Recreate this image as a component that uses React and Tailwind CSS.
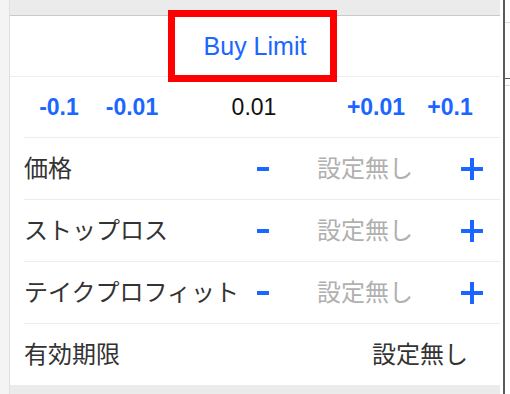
import React from 'react'

const BLUE = 'text-[#1a66ff]'

const STEPS = [
  { label: '-0.1', w: 'w-[70px]', blue: true },
  { label: '-0.01', w: 'w-[76px]', blue: true },
  { label: '0.01', w: 'w-[168px]', blue: false },
  { label: '+0.01', w: 'w-[76px]', blue: true },
  { label: '+0.1', w: 'w-[72px]', blue: true },
]

const ROWS = ['価格', 'ストップロス', 'テイクプロフィット']

function Minus() {
  return <div className="w-[12px] h-[4px] bg-[#1a66ff]" />
}

function Plus() {
  return (
    <div className="relative w-[22px] h-[22px] flex items-center justify-center">
      <div className="w-[22px] h-[4px] bg-[#1a66ff]" />
      <div className="absolute w-[4px] h-[22px] bg-[#1a66ff]" />
    </div>
  )
}

function StepperRow({ label }) {
  return (
    <div className="ml-[14px] h-[62px] flex items-center border-b border-[#ececec]">
      <span className="w-[233px] text-[24px] leading-none text-[#333]">{label}</span>
      <Minus />
      <span className="ml-[48px] w-[96px] text-[24px] leading-none text-[#b0b0b0]">設定無し</span>
      <div className="ml-[48px]">
        <Plus />
      </div>
    </div>
  )
}

export default function App() {
  return (
    <div
      className="w-[510px] h-[394px] flex overflow-hidden bg-white"
      style={{ fontFamily: '"Liberation Sans", "Noto Sans CJK JP", sans-serif' }}
    >
      {/* left gutter */}
      <div className="w-[10px] h-full bg-[#f4f4f4] border-r border-[#e0e0e0]" />

      {/* order panel */}
      <div className="relative w-[490px] h-full flex flex-col bg-white">
        <div className="h-[16px] bg-[#ebebeb] border-b border-[#c9c9c9]" />

        <div className="h-[61px] flex items-center justify-center border-b border-[#efefef]">
          <span className={`text-[25px] leading-none ${BLUE}`}>Buy Limit</span>
        </div>

        {/* highlight box */}
        <div className="absolute left-[158px] top-[10px] w-[169px] h-[72px] border-[7px] border-[#ff0000]" />

        <div className="ml-[14px] h-[61px] flex items-center border-b border-[#ececec]">
          {STEPS.map(s => (
            <span
              key={s.label}
              className={`${s.w} text-center text-[23px] leading-none ${s.blue ? `font-bold ${BLUE}` : 'text-[#111]'}`}
            >
              {s.label}
            </span>
          ))}
        </div>

        {ROWS.map(r => (
          <StepperRow key={r} label={r} />
        ))}

        <div className="ml-[14px] h-[61px] flex items-center justify-between pr-[32px]">
          <span className="text-[24px] leading-none text-[#333]">有効期限</span>
          <span className="text-[24px] leading-none text-[#333]">設定無し</span>
        </div>

        <div className="flex-1 bg-[#ebebeb]" />
      </div>

      {/* neighbouring window edge */}
      <div className="w-[10px] h-full flex">
        <div className="w-[3px] h-full bg-white" />
        <div className="w-[2px] h-full bg-[#5a5a5a]" />
        <div className="flex-1 h-full flex flex-col">
          <div className="h-[23px] border-b border-[#d8d8d8]" />
          <div className="h-[56px] border-b border-[#5a5a5a]" />
          <div className="h-[7px] border-b border-[#d8d8d8]" />
        </div>
      </div>
    </div>
  )
}
